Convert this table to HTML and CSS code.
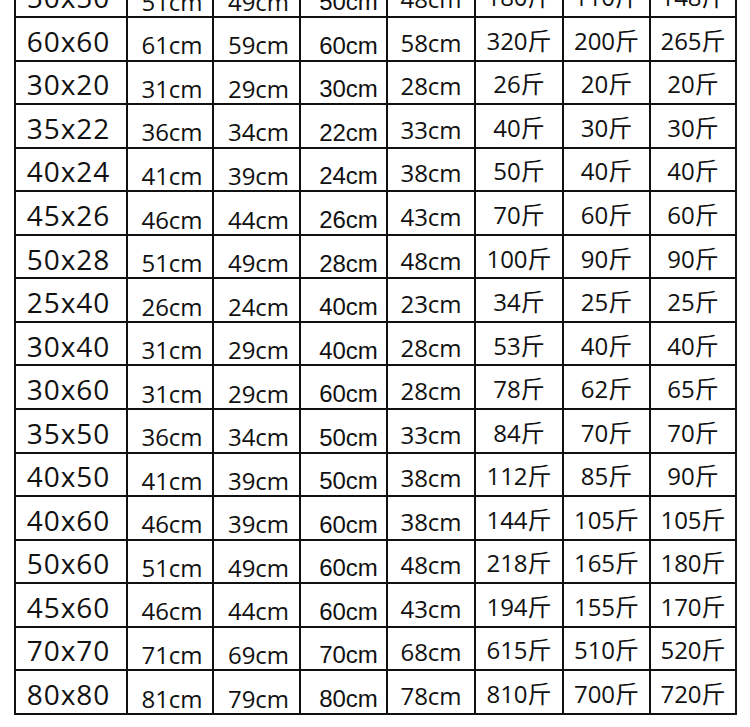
FILE: index.html
```html
<!DOCTYPE html>
<html lang="zh">
<head>
<meta charset="utf-8">
<title>尺寸表</title>
<link rel="stylesheet" href="styles.css">
</head>
<body>
<div class="sheet">
  <div class="grid" id="grid"></div>
</div>
<script>
const rows = [
  ["50x50","51cm","49cm","50cm","48cm","180斤","110斤","148斤"],
  ["60x60","61cm","59cm","60cm","58cm","320斤","200斤","265斤"],
  ["30x20","31cm","29cm","30cm","28cm","26斤","20斤","20斤"],
  ["35x22","36cm","34cm","22cm","33cm","40斤","30斤","30斤"],
  ["40x24","41cm","39cm","24cm","38cm","50斤","40斤","40斤"],
  ["45x26","46cm","44cm","26cm","43cm","70斤","60斤","60斤"],
  ["50x28","51cm","49cm","28cm","48cm","100斤","90斤","90斤"],
  ["25x40","26cm","24cm","40cm","23cm","34斤","25斤","25斤"],
  ["30x40","31cm","29cm","40cm","28cm","53斤","40斤","40斤"],
  ["30x60","31cm","29cm","60cm","28cm","78斤","62斤","65斤"],
  ["35x50","36cm","34cm","50cm","33cm","84斤","70斤","70斤"],
  ["40x50","41cm","39cm","50cm","38cm","112斤","85斤","90斤"],
  ["40x60","46cm","39cm","60cm","38cm","144斤","105斤","105斤"],
  ["50x60","51cm","49cm","60cm","48cm","218斤","165斤","180斤"],
  ["45x60","46cm","44cm","60cm","43cm","194斤","155斤","170斤"],
  ["70x70","71cm","69cm","70cm","68cm","615斤","510斤","520斤"],
  ["80x80","81cm","79cm","80cm","78cm","810斤","700斤","720斤"]
];
const cls = ["c-size","c-cm","c-cm","c-cm4","c-cm5","c-jin","c-jin","c-jin"];
const g = document.getElementById("grid");
rows.forEach(r => r.forEach((t, i) => {
  const d = document.createElement("div");
  d.className = "cell " + cls[i];
  d.textContent = t;
  g.appendChild(d);
}));
</script>
</body>
</html>
```

FILE: styles.css
```css
html, body {
  margin: 0;
  padding: 0;
  background: #fff;
}
.sheet {
  width: 750px;
  height: 727px;
  overflow: hidden;
  padding-left: 14px;
  box-sizing: border-box;
}
.grid {
  display: grid;
  grid-template-columns: 110px 84px 85px 85px 86px 86px 85px 84px;
  grid-auto-rows: 41.56px;
  gap: 2px;
  padding: 2px;
  background: #111;
  width: max-content;
  margin-top: -27.5px;
  font-family: "Open Sans", "Noto Sans CJK SC", sans-serif;
  color: #111;
}
.cell {
  background: #fff;
  display: flex;
  align-items: center;
  justify-content: center;
  line-height: 1;
  white-space: nowrap;
}
.c-size {
  font-size: 28px;
  letter-spacing: 1px;
  padding-top: 4px;
  padding-right: 5px;
}
.c-cm {
  font-size: 24px;
  padding-top: 13px;
  padding-left: 4px;
}
.c-cm4 {
  font-family: "Liberation Sans", Arial, sans-serif;
  font-size: 24px;
  padding-top: 14px;
  padding-left: 10px;
}
.c-cm5 {
  font-size: 24px;
  padding-top: 8px;
}
.c-jin {
  font-size: 24px;
  padding-top: 4px;
}
```
